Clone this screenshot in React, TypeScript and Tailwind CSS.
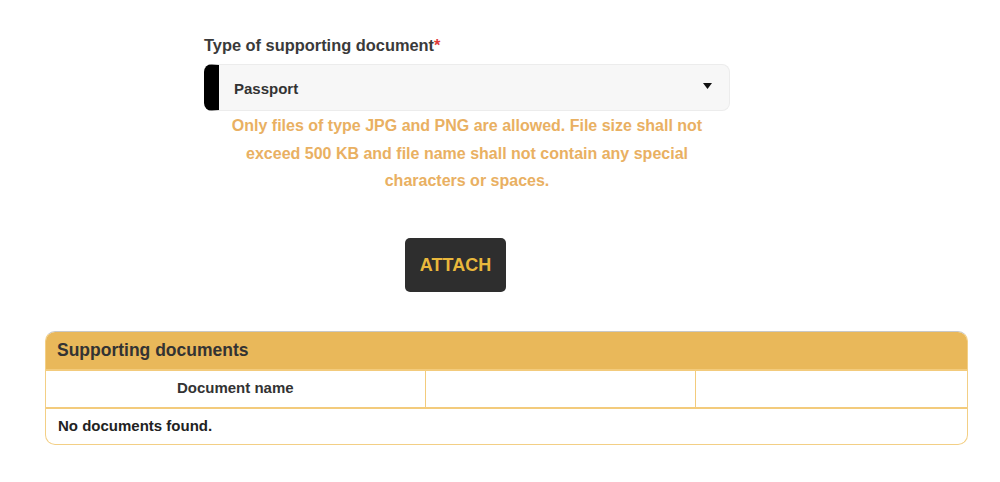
import { useState } from "react";

const font = { fontFamily: '"Liberation Sans", Arial, sans-serif' };

export default function App() {
  const [docType] = useState("Passport");

  return (
    <div className="w-[1000px] h-[482px] bg-white text-[#333]" style={font}>
      <div className="pt-[35px] pl-[204px]">
        <label className="block text-[16.4px] font-bold leading-[20px] text-[#3a3a3a]">
          Type of supporting document<span className="text-[#e03a3a]">*</span>
        </label>
        <div className="mt-[9px] flex h-[47px] w-[526px] items-center rounded-[8px] border border-[#ececec] border-l-[15px] border-l-black bg-[#f7f7f7] pl-[15px] pr-[17px]">
          <span className="flex-1 pt-[3px] text-[15px] font-bold text-[#333]">{docType}</span>
          <svg width="9" height="6" viewBox="0 0 9 6" className="mb-[3px]">
            <path d="M0 0h9L4.5 6z" fill="#111" />
          </svg>
        </div>
      </div>

      <p className="ml-[217px] mt-[1px] w-[500px] text-center text-[16px] font-bold leading-[27.5px] text-[#e9b062]">
        Only files of type JPG and PNG are allowed. File size shall not exceed 500 KB and file name shall not contain any special characters or spaces.
      </p>

      <div className="mt-[43px] flex pl-[405px]">
        <button className="h-[54px] w-[101px] rounded-[5px] bg-[#2e2e2e] pt-[2px] text-[18px] font-bold text-[#e9b83c]">
          ATTACH
        </button>
      </div>

      <div className="ml-[45px] mt-[39px] w-[923px] overflow-hidden rounded-[10px] border border-[#f3cf85] border-t-[#c8c8c8]">
        <div className="flex h-[37px] items-center bg-[#e9b85a] pl-[11px] text-[17.5px] font-bold text-[#333]">
          Supporting documents
        </div>
        <table className="w-full border-collapse">
          <thead>
            <tr className="h-[38px]">
              <th className="w-[379px] border-t-[2px] border-r border-b-[2px] border-[#f3cb7c] text-center text-[15px] font-bold text-[#333]">
                Document name
              </th>
              <th className="w-[270px] border-t-[2px] border-r border-b-[2px] border-[#f3cb7c]"></th>
              <th className="border-t-[2px] border-b-[2px] border-[#f3cb7c]"></th>
            </tr>
          </thead>
          <tbody>
            <tr className="h-[36px]">
              <td colSpan={3} className="pl-[12px] text-[15px] font-bold text-[#222]">
                No documents found.
              </td>
            </tr>
          </tbody>
        </table>
      </div>
    </div>
  );
}
